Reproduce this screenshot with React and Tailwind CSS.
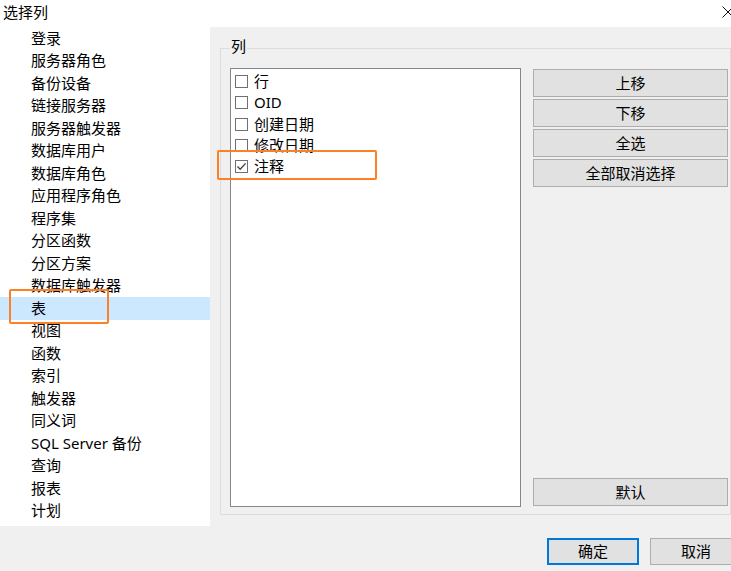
import React from "react";

const leftItems = [
  "登录", "服务器角色", "备份设备", "链接服务器", "服务器触发器", "数据库用户",
  "数据库角色", "应用程序角色", "程序集", "分区函数", "分区方案", "数据库触发器",
  "表", "视图", "函数", "索引", "触发器", "同义词", "SQL Server 备份", "查询", "报表", "计划",
];

const cols = [
  { label: "行", checked: false },
  { label: "OID", checked: false },
  { label: "创建日期", checked: false },
  { label: "修改日期", checked: false },
  { label: "注释", checked: true },
];

function Btn({ children }) {
  return (
    <div className="h-[28px] bg-[#e1e1e1] border border-[#adadad] flex items-center justify-center text-[15px] text-black leading-none">
      {children}
    </div>
  );
}

export default function App() {
  return (
    <div className="relative w-[731px] h-[571px] bg-[#f0f0f0] overflow-hidden font-['Noto_Sans','Noto_Sans_CJK_SC',sans-serif] text-black">
      {/* Title bar */}
      <div className="h-[27px] bg-white flex items-center pl-[3px]">
        <span className="text-[15px] leading-none -mt-[3px]">选择列</span>
        <svg className="ml-auto -mr-[3px] -mt-[3px]" width="12" height="12" viewBox="0 0 12 12">
          <path d="M0.5 0.5 L11.5 11.5 M11.5 0.5 L0.5 11.5" stroke="#111" strokeWidth="1" fill="none" />
        </svg>
      </div>

      {/* Body */}
      <div className="flex h-[499px]">
        <div className="w-[210px] bg-white">
          {leftItems.map((t) => (
            <div
              key={t}
              className={`h-[22.5px] pl-[31px] flex items-center text-[15px] leading-none ${t === "表" ? "bg-[#cce8ff]" : ""}`}
            >
              {t}
            </div>
          ))}
        </div>

        <div className="pl-[10px] pt-[21px]">
          <div className="relative w-[511px] h-[467px] border border-[#dcdcdc] pl-[9px] pt-[19px] flex gap-[12px]">
            <span className="absolute left-[9px] -top-[10px] bg-[#f0f0f0] px-[1px] text-[15px] leading-none">列</span>

            <div className="w-[291px] h-[439px] bg-white border border-[#828790] pt-[2px] pl-[4px]">
              {cols.map((c) => (
                <div key={c.label} className="h-[21.25px] flex items-center gap-[6px] text-[15px] leading-none">
                  <div className="w-[13px] h-[13px] border border-[#707070] bg-white flex items-center justify-center">
                    {c.checked && (
                      <svg width="11" height="11" viewBox="0 0 11 11">
                        <path d="M1.5 5.5 L4.2 8.3 L9.6 2.4" stroke="#444" strokeWidth="1.4" fill="none" />
                      </svg>
                    )}
                  </div>
                  <span>{c.label}</span>
                </div>
              ))}
            </div>

            <div className="w-[195px] h-[439px] pt-[1px] flex flex-col">
              <div className="flex flex-col gap-[2px]">
                <Btn>上移</Btn>
                <Btn>下移</Btn>
                <Btn>全选</Btn>
                <Btn>全部取消选择</Btn>
              </div>
              <div className="mt-auto mb-[1px]">
                <Btn>默认</Btn>
              </div>
            </div>
          </div>
        </div>
      </div>

      {/* Bottom buttons */}
      <div className="pt-[12px] pl-[547px] flex gap-[11px]">
        <div className="w-[92px] h-[27px] shrink-0 bg-[#e1e1e1] border-2 border-[#0078d7] flex items-center justify-center text-[15px] leading-none">
          确定
        </div>
        <div className="w-[92px] h-[27px] shrink-0 bg-[#e1e1e1] border border-[#adadad] flex items-center justify-center text-[15px] leading-none">
          取消
        </div>
      </div>

      {/* Annotation highlights */}
      <div className="absolute left-[9px] top-[289px] w-[100px] h-[35px] border-2 border-[#fb8124] rounded-[2px]" />
      <div className="absolute left-[217px] top-[150px] w-[160px] h-[30px] border-2 border-[#fb8124] rounded-[2px]" />
    </div>
  );
}
